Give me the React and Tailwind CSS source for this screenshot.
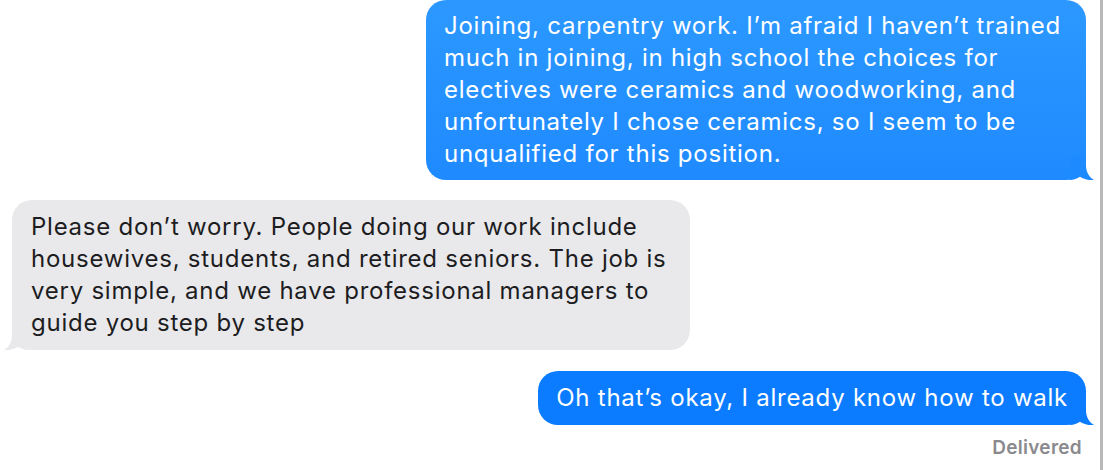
import React from 'react';

// Хвостик бульбашки (справа для своїх, дзеркально зліва для чужих)
function Tail({ color, side = 'right' }) {
  const pos = side === 'right' ? 'right-[-8px]' : 'left-[-8px] -scale-x-100';
  return (
    <svg
      className={`absolute bottom-0 ${pos} w-6 h-6`}
      viewBox="0 0 24 24"
    >
      <path
        d="M0 0 H16 V9 C16 16 19 21 24 24 C19 24.6 14 23.4 10 20.8 C7 22.8 4 24 0 24 Z"
        fill={color}
      />
    </svg>
  );
}

function Bubble({ mine, lines, className = '', tail }) {
  return (
    <div
      className={`relative rounded-[20px] px-[18px] py-[10px] text-[24px] leading-[32px] tracking-[0.75px] whitespace-nowrap ${
        mine ? 'text-white' : 'text-[#1d1d1f]'
      } ${className}`}
    >
      {lines.map((l, i) => (
        <div key={i}>{l}</div>
      ))}
      <Tail color={tail} side={mine ? 'right' : 'left'} />
    </div>
  );
}

export default function App() {
  return (
    <div
      className="w-[1104px] h-[470px] bg-white flex overflow-hidden"
      style={{ fontFamily: 'Inter, "Helvetica Neue", Arial, sans-serif' }}
    >
      <div className="flex-1 flex flex-col pr-[14px] pl-[12px]">
        <div className="flex justify-end">
          <Bubble
            mine
            tail="#1E8AFF"
            className="w-[660px] bg-gradient-to-b from-[#2C98FF] to-[#1E8AFF]"
            lines={[
              'Joining, carpentry work. I’m afraid I haven’t trained',
              'much in joining, in high school the choices for',
              'electives were ceramics and woodworking, and',
              'unfortunately I chose ceramics, so I seem to be',
              'unqualified for this position.',
            ]}
          />
        </div>

        <div className="flex justify-start mt-5">
          <Bubble
            tail="#E9E9EB"
            className="w-[678px] bg-[#E9E9EB] pl-[19px] py-[11px]"
            lines={[
              'Please don’t worry. People doing our work include',
              'housewives, students, and retired seniors. The job is',
              'very simple, and we have professional managers to',
              'guide you step by step',
            ]}
          />
        </div>

        <div className="flex justify-end mt-[21px]">
          <Bubble
            mine
            tail="#0B7BFF"
            className="bg-[#0B7BFF] py-[11px]"
            lines={['Oh that’s okay, I already know how to walk']}
          />
        </div>

        <div className="flex justify-end mt-[10px] pr-[4px] text-[19px] leading-[26px] tracking-[0.3px] font-semibold text-[#8a8a8e]">
          Delivered
        </div>
      </div>
      <div className="w-[3px] bg-[#b9b9b9] mr-[1px]" />
    </div>
  );
}
